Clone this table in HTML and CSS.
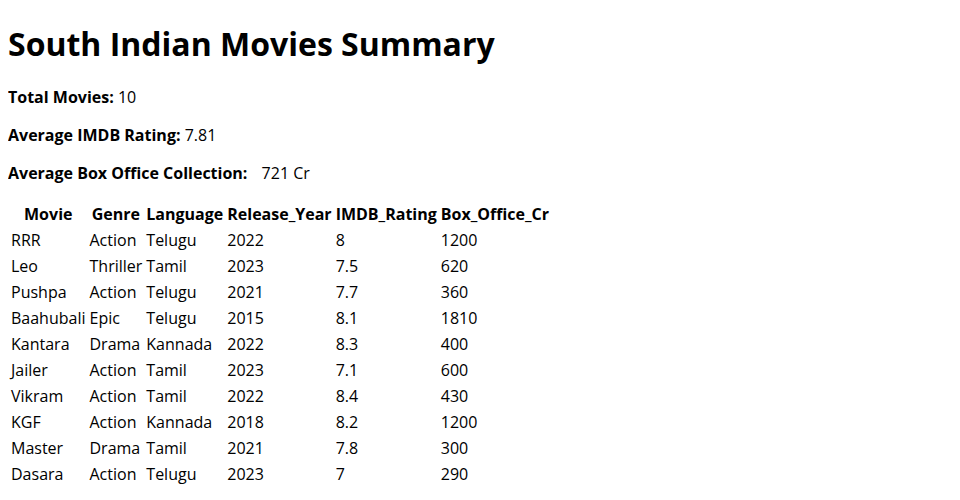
FILE: index.html
```html
<!DOCTYPE html>
<html>
<head>
<meta charset="utf-8">
<link rel="stylesheet" href="styles.css">
</head>
<body>
<h1 class="title">South Indian Movies Summary</h1>
<p class="stat"><b>Total Movies:</b> 10</p>
<p class="stat"><b>Average IMDB Rating:</b> 7.81</p>
<p class="stat"><b>Average Box Office Collection:</b> <span class="gap">721 Cr</span></p>
<table class="movies">
<thead>
<tr><th>Movie</th><th>Genre</th><th>Language</th><th>Release_Year</th><th>IMDB_Rating</th><th>Box_Office_Cr</th></tr>
</thead>
<tbody>
<tr><td>RRR</td><td>Action</td><td>Telugu</td><td>2022</td><td>8</td><td>1200</td></tr>
<tr><td>Leo</td><td>Thriller</td><td>Tamil</td><td>2023</td><td>7.5</td><td>620</td></tr>
<tr><td>Pushpa</td><td>Action</td><td>Telugu</td><td>2021</td><td>7.7</td><td>360</td></tr>
<tr><td>Baahubali</td><td>Epic</td><td>Telugu</td><td>2015</td><td>8.1</td><td>1810</td></tr>
<tr><td>Kantara</td><td>Drama</td><td>Kannada</td><td>2022</td><td>8.3</td><td>400</td></tr>
<tr><td>Jailer</td><td>Action</td><td>Tamil</td><td>2023</td><td>7.1</td><td>600</td></tr>
<tr><td>Vikram</td><td>Action</td><td>Tamil</td><td>2022</td><td>8.4</td><td>430</td></tr>
<tr><td>KGF</td><td>Action</td><td>Kannada</td><td>2018</td><td>8.2</td><td>1200</td></tr>
<tr><td>Master</td><td>Drama</td><td>Tamil</td><td>2021</td><td>7.8</td><td>300</td></tr>
<tr><td>Dasara</td><td>Action</td><td>Telugu</td><td>2023</td><td>7</td><td>290</td></tr>
</tbody>
</table>
</body>
</html>
```
FILE: styles.css
```css
body {
  margin: 8px;
  font-family: "Open Sans", sans-serif;
  font-size: 16px;
  color: #000;
  background: #fff;
}
.title {
  font-size: 32px;
  font-weight: 700;
  margin: 14px 0 21px;
}
.stat {
  margin: 16px 0;
}
.gap {
  margin-left: 10px;
}
.movies {
  border-collapse: separate;
  border-spacing: 2px;
}
.movies th, .movies td {
  padding: 1px;
  text-align: left;
}
.movies th {
  text-align: center;
  font-weight: 700;
}
```
